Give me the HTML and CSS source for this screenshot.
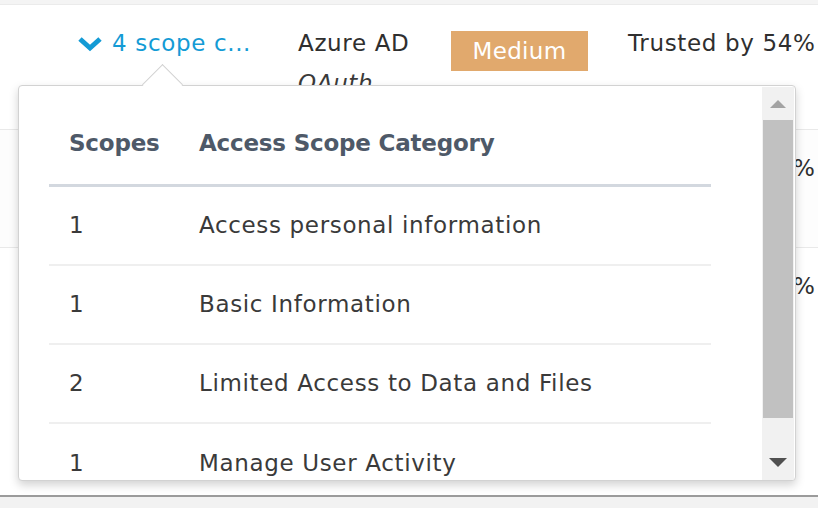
FILE: index.html
```html
<!DOCTYPE html>
<html>
<head>
<meta charset="utf-8">
<link rel="stylesheet" href="styles.css">
</head>
<body>
<div class="page">
  <div class="topstrip"></div>
  <div class="grid">
    <div class="row row-1">
      <div class="scope-link">
        <svg class="chev" width="26" height="16" viewBox="0 0 26 16"><polyline points="3,3 13,12 23,3" fill="none" stroke="#149bd5" stroke-width="5" stroke-linecap="butt" stroke-linejoin="miter"/></svg>
        <span>4 scope c...</span>
      </div>
      <div class="app">
        <div class="app-name">Azure AD</div>
        <div class="app-type">OAuth</div>
      </div>
      <div class="badge">Medium</div>
      <div class="trust">Trusted by 54%</div>
    </div>
    <div class="row row-2">
      <div class="spacer"></div>
      <div class="trust">Trusted by 54%</div>
    </div>
    <div class="row row-3">
      <div class="spacer"></div>
      <div class="trust">Trusted by 54%</div>
    </div>
  </div>
  <div class="bottombar"></div>

  <div class="popover">
    <div class="arrow"></div>
    <div class="pop-body">
      <div class="pop-content">
        <div class="tbl">
          <div class="tr th">
            <div class="c1">Scopes</div>
            <div class="c2">Access Scope Category</div>
          </div>
          <div class="tr">
            <div class="c1">1</div>
            <div class="c2">Access personal information</div>
          </div>
          <div class="tr">
            <div class="c1">1</div>
            <div class="c2">Basic Information</div>
          </div>
          <div class="tr">
            <div class="c1">2</div>
            <div class="c2">Limited Access to Data and Files</div>
          </div>
          <div class="tr last">
            <div class="c1">1</div>
            <div class="c2">Manage User Activity</div>
          </div>
        </div>
      </div>
      <div class="scrollbar">
        <div class="sb-btn sb-up"><span class="tri-up"></span></div>
        <div class="sb-thumb"></div>
        <div class="sb-btn sb-down"><span class="tri-down"></span></div>
      </div>
    </div>
  </div>
</div>
</body>
</html>
```

FILE: styles.css
```css
* { box-sizing: border-box; }
html, body {
  margin: 0;
  padding: 0;
  background: #ffffff;
}
body {
  font-family: "DejaVu Sans", "Liberation Sans", sans-serif;
  font-size: 23px;
  letter-spacing: 0.65px;
  color: #333333;
  width: 818px;
  height: 508px;
  overflow: hidden;
}
.page {
  position: relative;
  width: 818px;
  height: 508px;
  display: flex;
  flex-direction: column;
}
.topstrip {
  height: 5px;
  background: #f4f4f4;
  border-bottom: 1px solid #ebebeb;
}
.grid {
  display: flex;
  flex-direction: column;
  flex: 1;
}
.row {
  display: flex;
  align-items: flex-start;
  padding-top: 24px;
  padding-left: 78px;
  border-bottom: 1px solid #e9e9e9;
}
.row-1 { height: 125px; }
.row-2 { height: 118px; background: #fdfdfd; }
.row-3 { flex: 1; border-bottom: none; }
.spacer { width: 550px; }
.scope-link {
  width: 220px;
  display: flex;
  align-items: center;
  gap: 9px;
  color: #149bd5;
  line-height: 28px;
}
.chev { display: block; margin-top: 1px; margin-left: -1px; }
.app { width: 153px; line-height: 28px; color: #2f2f2f; }
.app-type { font-style: italic; color: #3a3a3a; margin-top: 12px; }
.badge {
  margin-top: 2px;
  width: 137px;
  height: 40px;
  background: #e1a96d;
  color: #ffffff;
  letter-spacing: 0.3px;
  display: flex;
  align-items: center;
  justify-content: center;
  margin-right: 40px;
}
.trust { line-height: 28px; color: #2f2f2f; white-space: nowrap; }
.bottombar {
  height: 13px;
  background: #f2f2f2;
  border-top: 2px solid #9b9b9b;
}

/* Popover */
.popover {
  position: absolute;
  left: 18px;
  top: 85px;
  width: 778px;
  height: 396px;
  background: #ffffff;
  border: 1px solid #d2d2d2;
  border-radius: 4px;
  box-shadow: 0 4px 10px rgba(0, 0, 0, 0.18);
}
.arrow {
  position: absolute;
  left: 129px;
  top: -16px;
  width: 29px;
  height: 29px;
  background: #ffffff;
  border-top: 1px solid #d2d2d2;
  border-left: 1px solid #d2d2d2;
  transform: rotate(45deg);
}
.pop-body {
  position: relative;
  display: flex;
  height: 100%;
  overflow: hidden;
  border-radius: 4px;
}
.pop-content {
  flex: 1;
  padding-left: 30px;
  padding-right: 50px;
}
.tbl { width: 662px; }
.tr {
  display: flex;
  height: 79px;
  align-items: center;
  border-bottom: 2px solid #efefef;
  color: #3a3a3a;
  padding-bottom: 2px;
}
.tr.last { border-bottom: none; }
.th {
  margin-top: 16px;
  height: 85px;
  padding-bottom: 0;
  border-bottom: 3px solid #d3d8df;
  font-weight: 600;
  color: #4e5968;
  letter-spacing: -0.2px;
}
.c1 { width: 130px; padding-left: 20px; }
.c2 { padding-left: 20px; }

.scrollbar {
  width: 32px;
  margin: 1px 1px 0 0;
  display: flex;
  flex-direction: column;
  background: #f1f1f1;
}
.sb-btn {
  display: flex;
  justify-content: center;
}
.sb-up { height: 33px; align-items: center; }
.sb-down { flex: 1; align-items: flex-end; padding-bottom: 13px; }
.sb-thumb {
  height: 298px;
  background: #c1c1c1;
  margin: 0 1px;
}
.tri-up {
  width: 0; height: 0;
  border-left: 8px solid transparent;
  border-right: 8px solid transparent;
  border-bottom: 8px solid #a3a3a3;
}
.tri-down {
  width: 0; height: 0;
  border-left: 9px solid transparent;
  border-right: 9px solid transparent;
  border-top: 9px solid #505050;
}
```
